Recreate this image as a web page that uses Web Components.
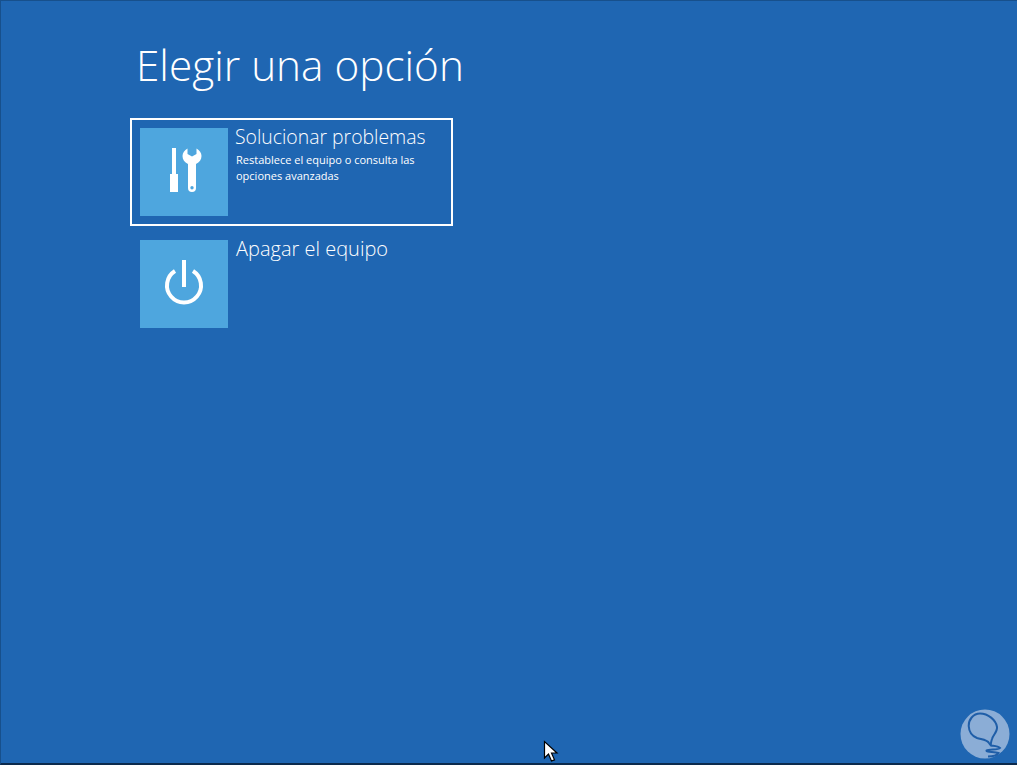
<!DOCTYPE html>
<html lang="es"><head><meta charset="utf-8"><title>Elegir una opción</title>
<style>
html,body{margin:0;height:100%;background:#1f66b2;overflow:hidden}
body{font-family:"Open Sans","Noto Sans",sans-serif;color:#fff}
</style></head><body>
<template id="t-screen"><style>
:host{display:block;position:relative;box-sizing:border-box;width:1017px;height:765px;background:#1f66b2;border-top:1px solid #17508c;border-left:1px solid #17508c;border-bottom:2px solid #0c2a4c;padding:39px 0 0 129px;overflow:hidden}
h1{margin:0 0 28px 6px;font:300 42.3px/50px "Open Sans",sans-serif;color:#fff}
.list{display:flex;flex-direction:column;gap:4px}
</style><h1><slot name="title"></slot></h1><div class="list"><slot></slot></div><slot name="overlay"></slot></template>

<template id="t-option"><style>
:host{display:flex;box-sizing:border-box;width:323px;height:108px;padding:8px;border:2px solid transparent;gap:8px}
:host([selected]){border-color:#fff}
.tile{flex:none;width:88px;height:88px;background:#4ea6de;display:flex;align-items:center;justify-content:center}
.txt{min-width:0;color:#fff}
.h{font:300 19.4px/20px "Open Sans",sans-serif;margin:-1px 0 0 -1px}
.d{font:400 11px/16px "Open Sans",sans-serif;margin-top:5px;width:200px}
:host(:not([selected])) .h{margin-left:0;font-size:20px}
</style><div class="tile"><slot name="icon"></slot></div><div class="txt"><div class="h"><slot name="heading"></slot></div><div class="d"><slot name="desc"></slot></div></div></template>

<template id="t-mark"><style>
:host{display:block;position:absolute;left:959px;top:708px;width:50px;height:50px}
svg{display:block}
</style><svg width="50" height="50" viewBox="0 0 50 50"><circle cx="25" cy="25" r="24.500" fill="#8badd6"/><path d="M20 4.500C13 4.500 8.500 11 8.700 17 9 23 12 27 17 29c5 1.500 10 1.500 12 5 1 1.500 1.500 2 2 2.500M20 4.500c8 0 16 6.500 17 13.500.5 5-4 8-5 12-1 3-1.500 5-1 6.500 3 .5 7 .5 9 2.500-2 2.500-11 .5-13.500 2.500-.5 2 8 1 12 2.500-1.500 2.500-6.500 3.500-10.500 3.500" fill="none" stroke="#1f5ea8" stroke-width="2"/></svg></template>

<template id="t-cursor"><style>
:host{display:block;position:absolute;left:542px;top:739px;width:16px;height:24px}
svg{display:block}
</style><svg width="16" height="24" viewBox="0 0 16 24"><path d="M1.500 1.500V18l4-4 3 7 3-1.200-3-6.800h5.500z" fill="#fff" stroke="#000" stroke-width="1.200"/></svg></template>

<win-screen>
<span slot="title">Elegir una opción</span>
<re-option selected>
<svg slot="icon" width="60" height="60" viewBox="0 0 60 60" fill="#fff"><path d="M18 6h4v26h-4z"/><path d="M16 32h8v18h-8z"/><path fill-rule="evenodd" d="M33.500 6.500V12l4.500 2.500 4.500-2.500V6.500c3 1.500 5 4.500 5 7.500 0 3.500-2 6.500-5.500 8v24a4 4 0 0 1-8 0V22c-3.500-1.500-5.500-4.500-5.500-8 0-3 2-6 5-7.500zM38 44a1.700 1.700 0 1 0 0 3.400 1.700 1.700 0 0 0 0-3.400z"/></svg>
<span slot="heading">Solucionar problemas</span>
<span slot="desc">Restablece el equipo o consulta las opciones avanzadas</span>
</re-option>
<re-option>
<svg slot="icon" width="60" height="60" viewBox="0 0 60 60" fill="none" stroke="#fff" stroke-width="4"><path d="M30 6v27"/><path d="M21 17a17 17 0 1 0 18 0"/></svg>
<span slot="heading">Apagar el equipo</span>
</re-option>
<site-mark slot="overlay"></site-mark>
<mouse-cursor slot="overlay"></mouse-cursor>
</win-screen>
<script>
function def(n,id){customElements.define(n,class extends HTMLElement{constructor(){super();this.attachShadow({mode:'open'}).appendChild(document.getElementById(id).content.cloneNode(true))}})}
def('win-screen','t-screen');def('re-option','t-option');def('site-mark','t-mark');def('mouse-cursor','t-cursor');
</script>
</body></html>
